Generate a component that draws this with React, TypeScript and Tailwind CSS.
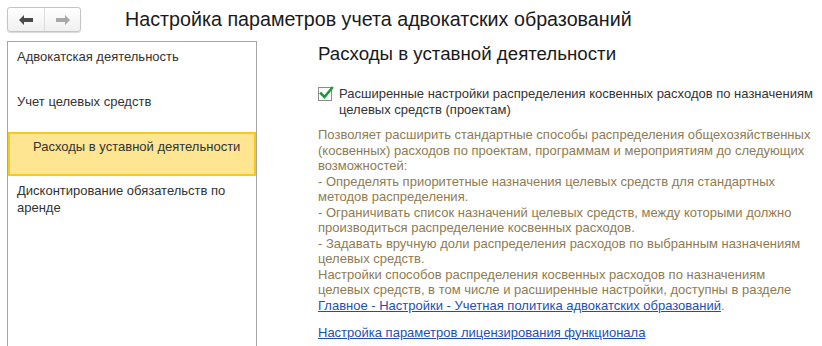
import React from "react";

const Arrow = ({ dir, color }: { dir: "left" | "right"; color: string }) => (
  <svg width="14" height="10" viewBox="0 0 14 10">
    {dir === "left" ? (
      <path d="M0 5 L5 0 L5 3 L14 3 L14 7 L5 7 L5 10 Z" fill={color} />
    ) : (
      <path d="M14 5 L9 0 L9 3 L0 3 L0 7 L9 7 L9 10 Z" fill={color} />
    )}
  </svg>
);

const descLines = [
  "Позволяет расширить стандартные способы распределения общехозяйственных",
  "(косвенных) расходов по проектам, программам и мероприятиям до следующих",
  "возможностей:",
  "- Определять приоритетные назначения целевых средств для стандартных",
  "методов распределения.",
  "- Ограничивать список назначений целевых средств, между которыми должно",
  "производиться распределение косвенных расходов.",
  "- Задавать вручную доли распределения расходов по выбранным назначениям",
  "целевых средств.",
  "Настройки способов распределения косвенных расходов по назначениям",
  "целевых средств, в том числе и расширенные настройки, доступны в разделе",
];

export default function App() {
  return (
    <div
      className="w-[822px] h-[346px] bg-white overflow-hidden text-[#333333]"
      style={{ fontFamily: '"Liberation Sans", Arial, sans-serif' }}
    >
      <div className="flex items-start pt-[7px] pl-[7px]">
        <div className="flex h-[25px] w-[74px] rounded-[3px] border border-[#c4c4c4] bg-gradient-to-b from-white to-[#f0f0f0] shadow-[0_1px_1px_rgba(0,0,0,0.15)]">
          <div className="flex w-[37px] items-center justify-center border-r border-[#dcdcdc]">
            <Arrow dir="left" color="#4a4a4a" />
          </div>
          <div className="flex flex-1 items-center justify-center">
            <Arrow dir="right" color="#a8a8a8" />
          </div>
        </div>
        <div className="ml-[44px] mt-[0px] text-[19.7px] leading-[24px] text-[#1a1a1a]">
          Настройка параметров учета адвокатских образований
        </div>
      </div>

      <div className="flex mt-[9px] pl-[7px]">
        <div className="w-[250px] h-[320px] border border-[#a6a6a6] text-[13px] leading-[17px]">
          <div className="h-[45px] px-[9px] pt-[6px]">Адвокатская деятельность</div>
          <div className="h-[45px] px-[9px] pt-[6px]">Учет целевых средств</div>
          <div className="h-[44px] border-2 border-[#f7c81e] bg-[#fde591] pl-[23px] pt-[4px]">
            Расходы в уставной деятельности
          </div>
          <div className="px-[9px] pt-[6px]">
            Дисконтирование обязательств по
            <br />
            аренде
          </div>
        </div>

        <div className="ml-[61px] flex flex-col">
          <div className="mt-[2px] text-[18.7px] leading-[22px] text-[#1a1a1a]">
            Расходы в уставной деятельности
          </div>
          <div className="mt-[21px] flex items-start text-[13px] leading-[16px]">
            <div className="relative mt-[1px] h-[14px] w-[14px] border border-[#8c8c8c] bg-white">
              <svg className="absolute left-[0px] top-[-2px]" width="15" height="15" viewBox="0 0 15 15">
                <path d="M2 7.5 L5.5 11 L13 2" stroke="#1e9a3a" strokeWidth="2.6" fill="none" strokeLinecap="square" />
              </svg>
            </div>
            <div className="ml-[7px]">
              Расширенные настройки распределения косвенных расходов по назначениям
              <br />
              целевых средств (проектам)
            </div>
          </div>
          <div className="mt-[9px] text-[13px] leading-[15.55px] text-[#8f7b52]">
            {descLines.map((l, i) => (
              <div key={i}>{l}</div>
            ))}
            <div>
              <span className="text-[#1d4fb3] underline">
                Главное - Настройки - Учетная политика адвокатских образований
              </span>
              .
            </div>
          </div>
          <div className="mt-[11px] text-[13px] leading-[16px] text-[#1d4fb3] underline">
            Настройка параметров лицензирования функционала
          </div>
        </div>
      </div>
    </div>
  );
}
